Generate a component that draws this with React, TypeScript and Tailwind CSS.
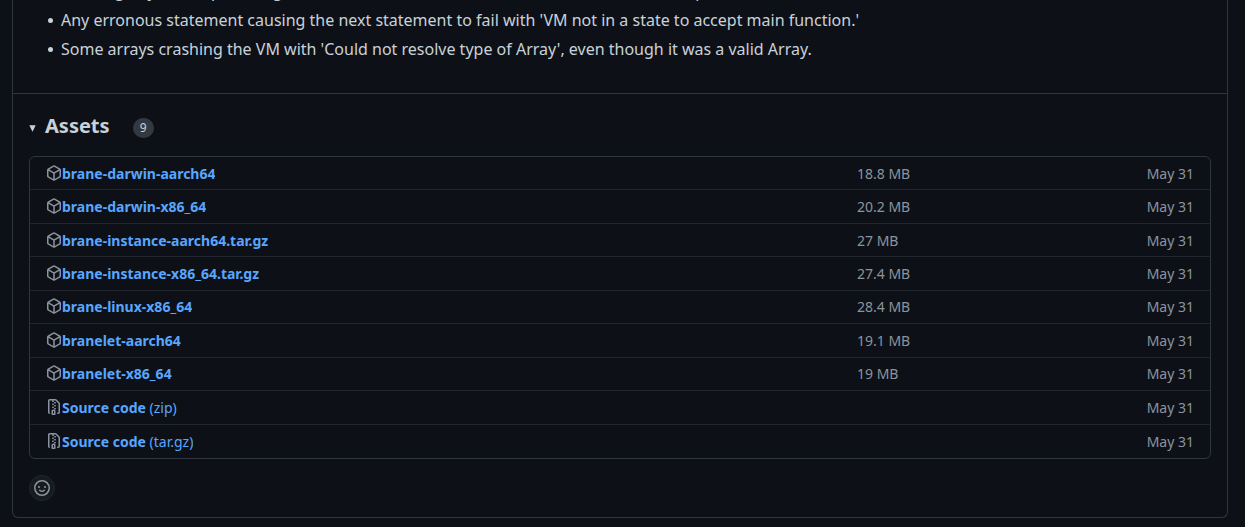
import React from "react";

const PACKAGE_PATH =
  "m8.878.392 5.25 3.045c.54.314.872.89.872 1.514v6.098a1.75 1.75 0 0 1-.872 1.514l-5.25 3.045a1.75 1.75 0 0 1-1.756 0l-5.25-3.045A1.75 1.75 0 0 1 1 11.049V4.951c0-.624.332-1.201.872-1.514L7.122.392a1.75 1.75 0 0 1 1.756 0ZM7.875 1.69l-4.63 2.685L8 7.133l4.755-2.758-4.63-2.685a.248.248 0 0 0-.25 0ZM2.5 5.677v5.372c0 .09.047.171.125.216l4.625 2.683V8.432Zm6.25 8.271 4.625-2.683a.25.25 0 0 0 .125-.216V5.677L8.75 8.432Z";
const ZIP_PATH =
  "M3.5 1.75v11.5c0 .09.048.173.126.217a.75.75 0 0 1-.752 1.298A1.748 1.748 0 0 1 2 13.25V1.75C2 .784 2.784 0 3.75 0h5.586c.464 0 .909.185 1.237.513l2.914 2.914c.329.328.513.773.513 1.237v8.586A1.75 1.75 0 0 1 12.25 15h-.5a.75.75 0 0 1 0-1.5h.5a.25.25 0 0 0 .25-.25V4.664a.25.25 0 0 0-.073-.177L9.513 1.573a.25.25 0 0 0-.177-.073H7.25a.75.75 0 0 1 0 1.5h-.5a.75.75 0 0 1 0-1.5h-3a.25.25 0 0 0-.25.25Zm3.75 8.75h.5c.966 0 1.75.784 1.75 1.75v3a.75.75 0 0 1-.75.75h-2.5a.75.75 0 0 1-.75-.75v-3c0-.966.784-1.75 1.75-1.75ZM6 5.25a.75.75 0 0 1 .75-.75h.5a.75.75 0 0 1 0 1.5h-.5A.75.75 0 0 1 6 5.25Zm.75 2.25h.5a.75.75 0 0 1 0 1.5h-.5a.75.75 0 0 1 0-1.5ZM8 6.75A.75.75 0 0 1 8.75 6h.5a.75.75 0 0 1 0 1.5h-.5A.75.75 0 0 1 8 6.75ZM8.75 3h.5a.75.75 0 0 1 0 1.5h-.5a.75.75 0 0 1 0-1.5ZM8 9.75A.75.75 0 0 1 8.75 9h.5a.75.75 0 0 1 0 1.5h-.5A.75.75 0 0 1 8 9.75Zm-1 2.5v2.25h1v-2.25a.25.25 0 0 0-.25-.25h-.5a.25.25 0 0 0-.25.25Z";
const SMILEY_PATH =
  "M8 0a8 8 0 1 1 0 16A8 8 0 0 1 8 0ZM1.5 8a6.5 6.5 0 1 0 13 0 6.5 6.5 0 0 0-13 0Zm3.82 1.636a.75.75 0 0 1 1.038.175l.007.009c.103.118.22.222.35.31.264.178.683.37 1.285.37.602 0 1.02-.192 1.285-.371.13-.088.247-.192.35-.31l.007-.008a.75.75 0 0 1 1.222.87c-.06.085-.13.165-.2.236-.16.166-.338.316-.53.445-.63.418-1.37.638-2.127.629-.946 0-1.652-.308-2.126-.63a3.331 3.331 0 0 1-.715-.657.75.75 0 0 1 .183-1.064ZM12 7a1 1 0 1 1-2 0 1 1 0 0 1 2 0ZM5 8a1 1 0 1 1 0-2 1 1 0 0 1 0 2Z";

type Asset = { name: string; format?: string; size?: string };

const assets: Asset[] = [
  { name: "brane-darwin-aarch64", size: "18.8 MB" },
  { name: "brane-darwin-x86_64", size: "20.2 MB" },
  { name: "brane-instance-aarch64.tar.gz", size: "27 MB" },
  { name: "brane-instance-x86_64.tar.gz", size: "27.4 MB" },
  { name: "brane-linux-x86_64", size: "28.4 MB" },
  { name: "branelet-aarch64", size: "19.1 MB" },
  { name: "branelet-x86_64", size: "19 MB" },
  { name: "Source code", format: "(zip)" },
  { name: "Source code", format: "(tar.gz)" },
];

const fixes = [
  "Running any server providing a function that was not defined in the current local scope.",
  "Any erronous statement causing the next statement to fail with 'VM not in a state to accept main function.'",
  "Some arrays crashing the VM with 'Could not resolve type of Array', even though it was a valid Array.",
];

function Icon({ path }: { path: string }) {
  return (
    <svg viewBox="0 0 16 16" aria-hidden="true" className="size-4 shrink-0 fill-[#8b949e]">
      <path d={path} />
    </svg>
  );
}

function AssetRow({ name, format, size }: Asset) {
  return (
    <li className="flex items-center border-b border-[#21262d] px-4 pt-px last:border-b-0">
      <div className="flex min-w-0 flex-1 items-start">
        <span className="pt-px">
          <Icon path={format ? ZIP_PATH : PACKAGE_PATH} />
        </span>
        <a href="#" className="truncate text-[#58a6ff] hover:underline">
          <span className="font-bold">{name}</span>
          {format && <span> {format}</span>}
        </a>
      </div>
      <div className="flex w-[337px] justify-between text-[#8b949e]">
        <span>{size}</span>
        <span>May 31</span>
      </div>
    </li>
  );
}

export default function App() {
  return (
    <div className="flow-root min-h-screen bg-[#0d1117] pr-[17px] pb-[9px] pl-3 font-['Noto_Sans',sans-serif] text-sm text-[#c9d1d9]">
      <main className="-mt-[21px] rounded-b-md border border-t-0 border-[#30363d]">
        <ul className="space-y-[5px] pb-8 pl-[35px] text-base">
          {fixes.map((fix) => (
            <li
              key={fix}
              className="flex gap-2 before:mt-[10px] before:size-[5px] before:shrink-0 before:rounded-full before:bg-[#c9d1d9]"
            >
              {fix}
            </li>
          ))}
        </ul>
        <section className="border-t border-[#30363d] p-4">
          <details open>
            <summary className="mb-[14px] flex cursor-pointer list-none items-center">
              <svg viewBox="0 0 7 7" aria-hidden="true" className="mt-1 mr-[9px] size-[7px] fill-[#c9d1d9]">
                <path d="M.3.3h6.4L3.5 6.8z" />
              </svg>
              <h3 className="mr-[23px] text-xl leading-8 font-bold">Assets</h3>
              <span className="mt-1 min-w-[21px] rounded-full bg-[#343941] px-1.5 text-center text-xs leading-5">
                {assets.length}
              </span>
            </summary>
            <ul className="grid min-h-[303px] auto-rows-fr rounded-md border border-[#30363d]">
              {assets.map((asset) => (
                <AssetRow key={asset.name + (asset.format ?? "")} {...asset} />
              ))}
            </ul>
          </details>
          <button
            type="button"
            aria-label="Add your reaction"
            className="mt-4 flex size-[26px] items-center justify-center rounded-full border border-[#21262d] bg-[#161b22]"
          >
            <Icon path={SMILEY_PATH} />
          </button>
        </section>
      </main>
    </div>
  );
}
